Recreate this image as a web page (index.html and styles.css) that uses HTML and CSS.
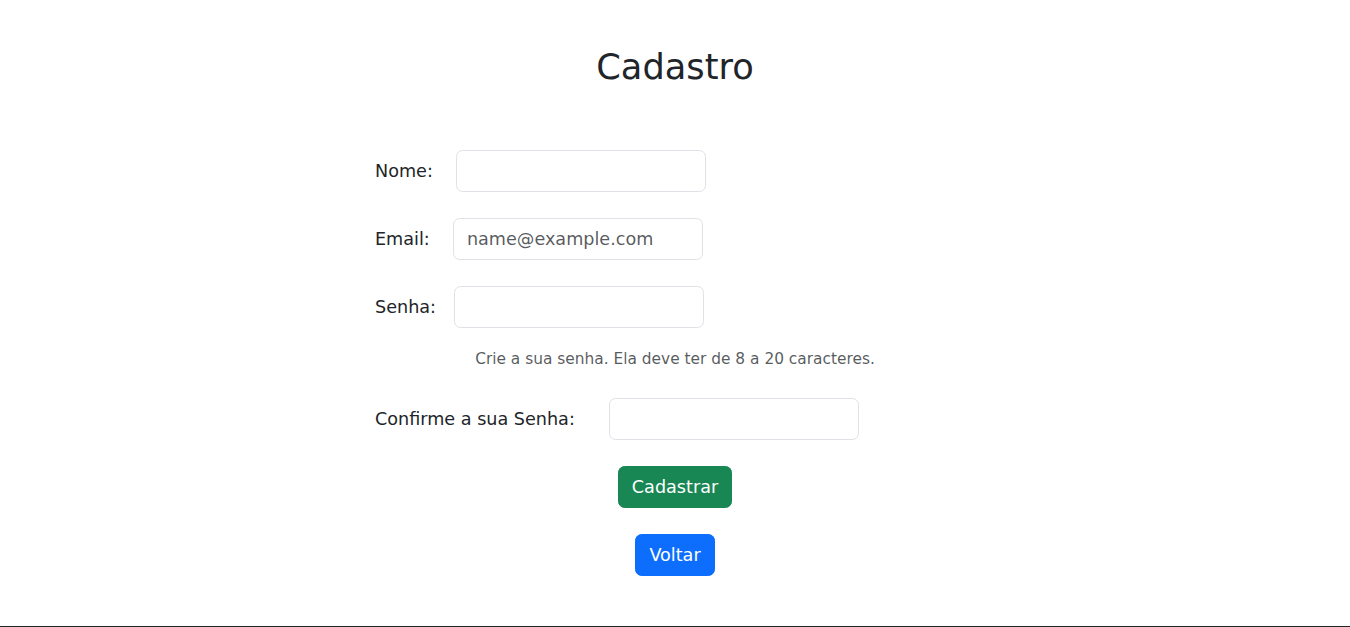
FILE: index.html
```html
<!DOCTYPE html>
<html lang="pt-BR">
<head>
<meta charset="utf-8">
<title>Cadastro</title>
<link rel="stylesheet" href="styles.css">
</head>
<body>
<main class="page">
  <h2 class="title">Cadastro</h2>
  <form class="form">
    <div class="row">
      <label class="label" for="nome">Nome:</label>
      <input class="control" id="nome" type="text">
    </div>
    <div class="row">
      <label class="label" for="email">Email:</label>
      <input class="control" id="email" type="email" placeholder="name@example.com">
    </div>
    <div class="row row-help">
      <label class="label label-senha" for="senha">Senha:</label>
      <input class="control" id="senha" type="password">
    </div>
    <p class="help">Crie a sua senha. Ela deve ter de 8 a 20 caracteres.</p>
    <div class="row">
      <label class="label label-confirm" for="confirma">Confirme a sua Senha:</label>
      <input class="control" id="confirma" type="password">
    </div>
    <div class="actions">
      <button type="submit" class="btn btn-success">Cadastrar</button>
      <button type="button" class="btn btn-primary">Voltar</button>
    </div>
  </form>
</main>
<footer class="footer"></footer>
</body>
</html>
```

FILE: styles.css
```css
html, body {
  margin: 0;
  padding: 0;
}
body {
  font-family: "DejaVu Sans", sans-serif;
  font-size: 17.6px;
  line-height: 1.5;
  color: #212529;
  background: #fff;
}
.page {
  display: flex;
  flex-direction: column;
  align-items: center;
  padding-top: 46px;
}
.title {
  margin: 0;
  font-size: 35.2px;
  font-weight: 500;
  line-height: 1.2;
}
.form {
  width: 600px;
  margin-top: 62px;
  display: flex;
  flex-direction: column;
}
.row {
  display: flex;
  align-items: center;
  gap: 23px;
  margin-bottom: 26.4px;
}
.label-senha { margin-right: -5px; }
.label-confirm { margin-right: 11px; }
.row-help { margin-bottom: 20px; }
.control {
  box-sizing: border-box;
  width: 250px;
  height: 41.6px;
  padding: 6.6px 13.2px;
  font-family: inherit;
  font-size: 17.6px;
  line-height: 1.5;
  color: #212529;
  background: #fff;
  border: 1px solid #dee2e6;
  border-radius: 6.6px;
  outline: none;
}
.control::placeholder {
  color: rgba(33, 37, 41, 0.75);
}
.help {
  margin: 0 0 27.4px;
  font-size: 15.4px;
  line-height: 1.5;
  color: rgba(33, 37, 41, 0.75);
  text-align: center;
}
.actions {
  display: flex;
  flex-direction: column;
  align-items: center;
  gap: 26.4px;
}
.btn {
  box-sizing: border-box;
  height: 41.6px;
  padding: 6.6px 13.2px;
  font-family: inherit;
  font-size: 17.6px;
  line-height: 1.5;
  color: #fff;
  border: 1px solid transparent;
  border-radius: 6.6px;
}
.btn-success {
  background: #198754;
  border-color: #198754;
}
.btn-primary {
  background: #0d6efd;
  border-color: #0d6efd;
}
.footer {
  margin-top: 50px;
  height: 40px;
  background: #212529;
}
```
